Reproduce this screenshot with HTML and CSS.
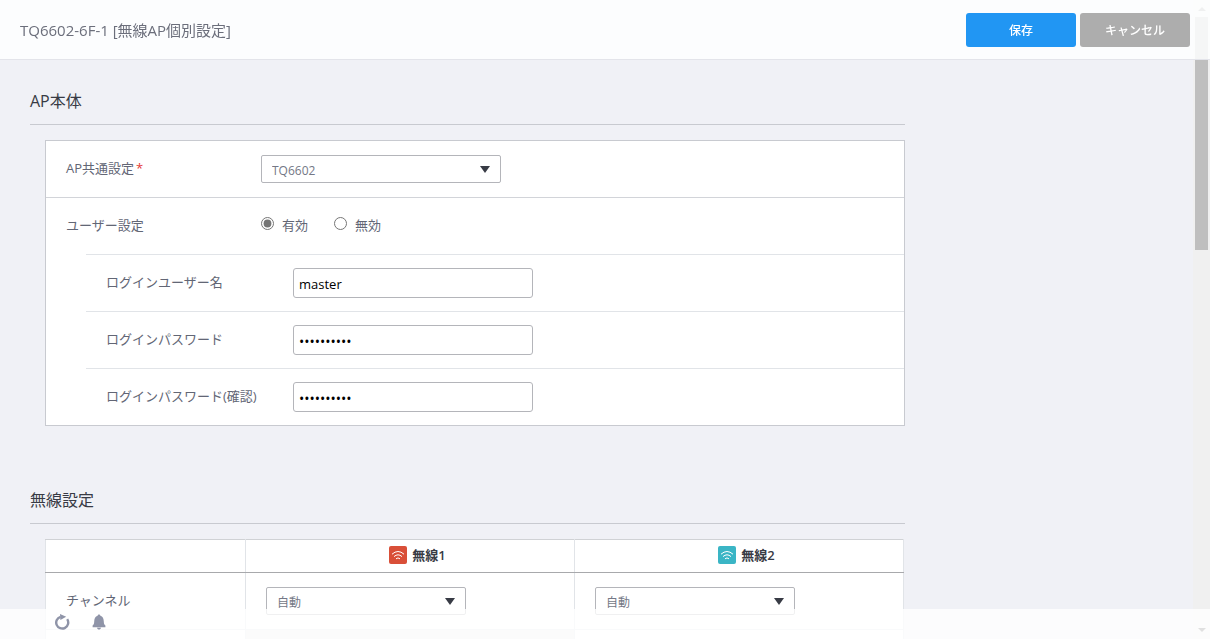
FILE: index.html
```html
<!DOCTYPE html>
<html lang="ja">
<head>
    <meta charset="UTF-8">
    <meta name="viewport" content="width=device-width, initial-scale=1.0">
    <title>無線AP個別設定</title>
    <link rel="stylesheet" href="styles.css">
</head>
<body>

    <header class="topbar">
        <h1>TQ6602-6F-1 [無線AP個別設定]</h1>
        <div class="actions">
            <button type="button" class="btn btn-save">保存</button>
            <button type="button" class="btn btn-cancel">キャンセル</button>
        </div>
    </header>

    <main class="content">
        <section class="section">
            <h2>AP本体</h2>
            <form class="panel">
                <div class="row">
                    <label class="label" for="common">AP共通設定<span class="required">*</span></label>
                    <div class="select select-wide">
                        <select id="common">
                            <option>TQ6602</option>
                        </select>
                    </div>
                </div>
                <div class="row row-user" role="radiogroup" aria-labelledby="userLabel">
                    <span class="label" id="userLabel">ユーザー設定</span>
                    <label class="radio"><input type="radio" name="user" checked>有効</label>
                    <label class="radio"><input type="radio" name="user">無効</label>
                </div>
                <div class="sub-rows">
                    <div class="row">
                        <label class="label" for="loginName">ログインユーザー名</label>
                        <input class="text" type="text" id="loginName" value="master">
                    </div>
                    <div class="row">
                        <label class="label" for="loginPass">ログインパスワード</label>
                        <input class="text" type="password" id="loginPass" value="password12">
                    </div>
                    <div class="row">
                        <label class="label" for="loginPass2">ログインパスワード(確認)</label>
                        <input class="text" type="password" id="loginPass2" value="password12">
                    </div>
                </div>
            </form>
        </section>

        <section class="section">
            <h2>無線設定</h2>
            <table class="radio-table">
                <colgroup>
                    <col class="col-label">
                    <col>
                    <col>
                </colgroup>
                <thead>
                    <tr>
                        <td></td>
                        <th scope="col">
                            <span class="band">
                                <svg class="wifi wifi-red" viewBox="0 0 18 18" aria-hidden="true">
                                    <path d="M3 8.2Q9 2.8 15 8.2M5 10.6Q9 7 13 10.6M7 12.8Q9 11 11 12.8"/>
                                </svg>
                                無線1
                            </span>
                        </th>
                        <th scope="col">
                            <span class="band">
                                <svg class="wifi wifi-teal" viewBox="0 0 18 18" aria-hidden="true">
                                    <path d="M3 8.2Q9 2.8 15 8.2M5 10.6Q9 7 13 10.6M7 12.8Q9 11 11 12.8"/>
                                </svg>
                                無線2
                            </span>
                        </th>
                    </tr>
                </thead>
                <tbody>
                    <tr>
                        <th scope="row">チャンネル</th>
                        <td>
                            <div class="select">
                                <select aria-label="無線1 チャンネル">
                                    <option>自動</option>
                                </select>
                            </div>
                        </td>
                        <td>
                            <div class="select">
                                <select aria-label="無線2 チャンネル">
                                    <option>自動</option>
                                </select>
                            </div>
                        </td>
                    </tr>
                    <tr>
                        <th></th>
                        <td class="disabled"></td>
                        <td></td>
                    </tr>
                </tbody>
            </table>
        </section>
    </main>

    <!-- Scroll bar -->
    <div class="scrollbar">
        <span class="arrow arrow-up"></span>
        <div class="track"><div class="thumb"></div></div>
        <span class="arrow arrow-down"></span>
    </div>

    <footer class="bottombar">
        <button type="button" class="icon-btn" aria-label="更新">
            <svg viewBox="0 0 16 16">
                <path d="M13.2 5.2A6 6 0 1 1 6.5 2.8" fill="none" stroke="#8f94a8" stroke-width="2.4"/>
                <path d="M6 0L12.2 2.8L6.4 6Z" fill="#8f94a8"/>
            </svg>
        </button>
        <button type="button" class="icon-btn" aria-label="通知">
            <svg viewBox="0 0 16 16">
                <path d="M8 0.4C8.9 0.4 9.3 1 9.4 1.8C11.8 2.6 12.7 4.6 12.8 7.4C12.9 9.6 13.2 10.2 14.4 11.6V13.2H1.6V11.6C2.8 10.2 3.1 9.6 3.2 7.4C3.3 4.6 4.2 2.6 6.6 1.8C6.7 1 7.1 0.4 8 0.4ZM6 13.8H10C9.8 15 9 15.6 8 15.6S6.2 15 6 13.8Z" fill="#8f94a8"/>
            </svg>
        </button>
    </footer>

</body>
</html>
```

FILE: styles.css
```css
* {
    box-sizing: border-box;
}

body {
    margin: 0;
    font-family: "Open Sans", "Noto Sans CJK JP", sans-serif;
    font-size: 13px;
    line-height: 20px;
    color: #626675;
    background-color: #f0f1f6;
    height: 100vh;
    overflow: hidden;
}

button, input, select {
    font-family: inherit;
    font-size: 13px;
}

/* Header */
.topbar {
    position: fixed;
    top: 0;
    left: 0;
    right: 0;
    z-index: 3;
    display: flex;
    align-items: center;
    justify-content: space-between;
    height: 60px;
    padding: 0 20px;
    background-color: rgba(254, 255, 255, 0.85);
    border-bottom: 1px solid #e3e4ea;
}

h1 {
    margin: 0;
    font-size: 15px;
    font-weight: normal;
    color: #6b6e7b;
}

.actions {
    display: flex;
    gap: 4px;
}

.btn {
    width: 110px;
    height: 34px;
    padding: 0;
    border: none;
    border-radius: 3px;
    color: white;
    font-size: 12px;
    font-weight: 500;
    cursor: pointer;
}

.btn-save {
    background-color: #2196f3;
}

.btn-cancel {
    background-color: #adadad;
}

/* Sections */
.content {
    height: 100vh;
    padding: 60px 30px 0;
    overflow: hidden;
}

.section {
    max-width: 875px;
    margin-bottom: 33px;
}

h2 {
    margin: 0 0 15px;
    padding: 29px 0 11px;
    border-bottom: 1px solid #c8cad0;
    font-size: 16px;
    line-height: 24px;
    font-weight: normal;
    color: #383b45;
}

.panel {
    margin-left: 15px;
    background-color: white;
    border: 1px solid #c8cad0;
}

.row {
    display: flex;
    align-items: center;
    height: 57px;
    padding-left: 20px;
    border-bottom: 1px solid #d2d4d9;
}

.row-user {
    height: 56px;
    border-bottom: none;
}

.label {
    width: 195px;
    padding-bottom: 2px;
}

.required {
    margin-left: 2px;
    color: #e53935;
}

.sub-rows {
    margin-left: 40px;
}

.sub-rows .row {
    border-top: 1px solid #e1e4e8;
    border-bottom: none;
}

.sub-rows .label {
    width: 187px;
}

.text {
    width: 240px;
    height: 30px;
    padding: 2px 5px 0;
    border: 1px solid #b4b5ba;
    border-radius: 3px;
    color: black;
    background-color: white;
}

.text[type="password"] {
    font-size: 14px;
}

.radio {
    display: flex;
    align-items: center;
    gap: 8px;
    margin-right: 26px;
    padding-bottom: 2px;
}

.radio input {
    width: 13px;
    height: 13px;
    margin: 0 0 3px;
    accent-color: #757575;
}

/* Drop-downs */
.select {
    position: relative;
    width: 200px;
}

.select-wide {
    width: 240px;
}

.select select {
    display: block;
    width: 100%;
    height: 28px;
    padding: 2px 10px 0;
    appearance: none;
    border: 1px solid #b4b5ba;
    border-radius: 2px;
    background-color: white;
    color: #747886;
    font-size: 12px;
}

.select::after {
    content: "";
    position: absolute;
    top: 11px;
    right: 11px;
    border: 5px solid transparent;
    border-top: 7px solid #383b45;
    border-bottom: none;
    pointer-events: none;
}

/* Wireless table */
.radio-table {
    width: calc(100% - 16px);
    margin-left: 15px;
    table-layout: fixed;
    border-collapse: collapse;
    background-color: white;
    border: 1px solid #d0d2d5;
}

.col-label {
    width: 200px;
}

.radio-table td,
.radio-table th {
    height: 57px;
    padding: 0 20px;
    border: 1px solid #e1e4e8;
}

.radio-table thead td,
.radio-table thead th {
    height: 33px;
    padding: 0 0 2px 15px;
    border-top-color: #d0d2d5;
    border-bottom-color: #a8a9ac;
    color: #383b45;
    font-weight: 600;
}

.radio-table tbody th {
    padding-bottom: 2px;
    text-align: left;
    font-weight: normal;
}

.radio-table .disabled {
    background-color: #ebebeb;
}

.band {
    display: flex;
    align-items: center;
    justify-content: center;
    gap: 5px;
}

.wifi {
    width: 18px;
    height: 18px;
    border-radius: 2px;
    fill: none;
    stroke: white;
    stroke-width: 1;
}

.wifi-red {
    background-color: #d94f38;
}

.wifi-teal {
    background-color: #3ab5c5;
}

/* Scroll bar */
.scrollbar {
    position: fixed;
    top: 0;
    right: 0;
    bottom: 0;
    z-index: 2;
    display: flex;
    flex-direction: column;
    align-items: center;
    width: 17px;
    padding: 7px 0;
    background-color: #f0f0f0;
}

.track {
    flex: 1;
    width: 13px;
    padding: 6px 0;
}

.thumb {
    height: 233px;
    background-color: #bfbfbf;
}

.arrow {
    border: 4px solid transparent;
}

.arrow-up {
    border-top: none;
    border-bottom-color: #999999;
}

.arrow-down {
    border-bottom: none;
    border-top-color: #666666;
}

/* Footer */
.bottombar {
    position: fixed;
    left: 0;
    right: 0;
    bottom: 0;
    z-index: 3;
    display: flex;
    gap: 21px;
    height: 30px;
    padding: 5px 54px;
    background-color: rgba(255, 255, 255, 0.8);
}

.icon-btn {
    width: 16px;
    height: 16px;
    padding: 0;
    border: none;
    background: none;
    cursor: pointer;
}

.icon-btn svg {
    display: block;
    width: 16px;
    height: 16px;
}
```
